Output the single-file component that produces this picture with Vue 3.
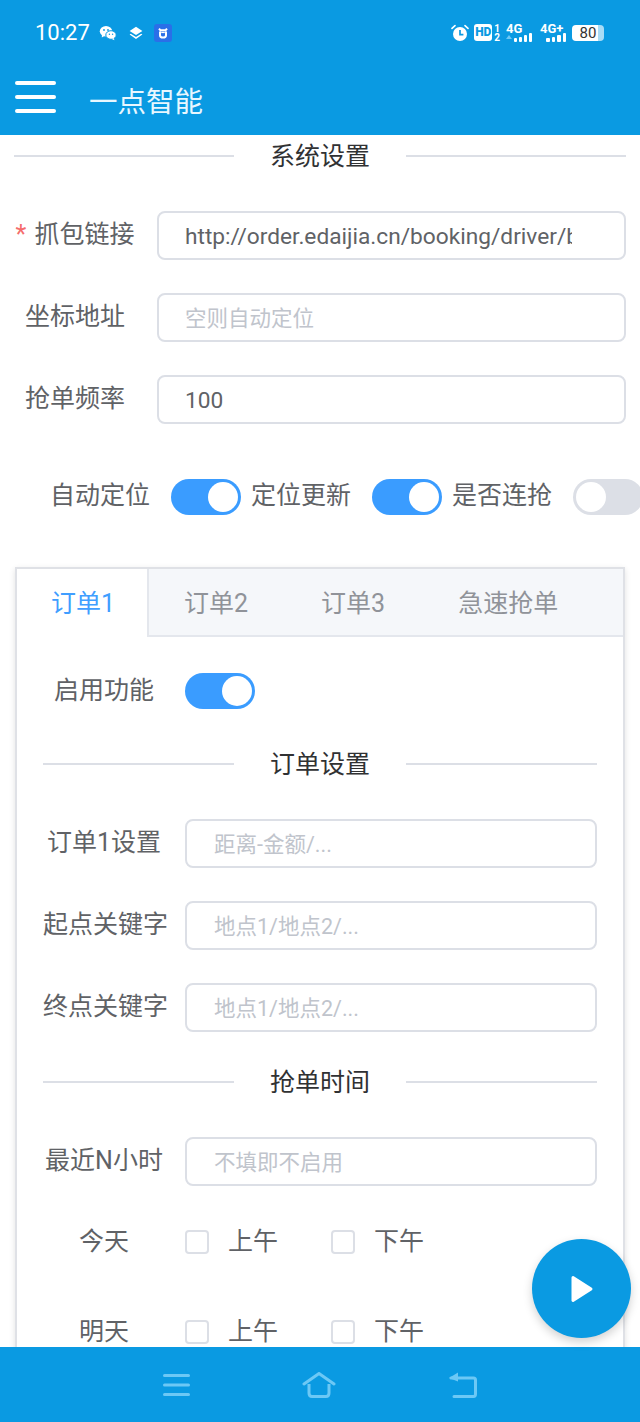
<template>
  <div class="screen">
    <div class="top">
      <div class="status">
        <span class="time">10:27</span>
        <svg class="ic-wechat" width="18" height="16" viewBox="0 0 18 16">
          <ellipse cx="7" cy="6.200" rx="6.200" ry="5.200" fill="#fff" />
          <path d="M3 9.500 2.800 12.400 6 10.600Z" fill="#fff" />
          <ellipse cx="12" cy="10" rx="5.200" ry="4.300" fill="#fff" stroke="#0a9ae2" stroke-width="1" />
          <path d="M14.800 13 15.400 15.200 12.800 14Z" fill="#fff" />
          <circle cx="5" cy="5" r=".9" fill="#0a9ae2" />
          <circle cx="9" cy="5" r=".9" fill="#0a9ae2" />
          <circle cx="10.400" cy="9.200" r=".7" fill="#0a9ae2" />
          <circle cx="13.600" cy="9.200" r=".7" fill="#0a9ae2" />
        </svg>
        <svg class="ic-layers" width="14" height="14" viewBox="0 0 14 14">
          <path d="M7 .8 13.400 4.900 7 9 .6 4.900Z" fill="#fff" />
          <path d="M1.800 7.700 7 11 12.200 7.700 13.400 8.600 7 13 .6 8.600Z" fill="#fff" />
        </svg>
        <svg class="ic-app" width="18" height="18" viewBox="0 0 18 18">
          <rect width="18" height="18" rx="3" fill="#2a6fe8" />
          <path d="M5 4.600 6.400 6.200H11.600L13 4.600M6 7.400V11.200C6 12.600 7 13.600 9 13.600S12 12.600 12 11.200V7.400" fill="none" stroke="#fff" stroke-width="2" />
          <path d="M7.200 8.400H10.800" stroke="#fff" stroke-width="1.400" />
        </svg>
        <span class="status-gap"></span>
        <svg class="ic-alarm" width="18" height="18" viewBox="0 0 18 18">
          <circle cx="9" cy="10" r="7" fill="#fff" />
          <path d="M1 4.400 4 1.600M17 4.400 14 1.600" stroke="#fff" stroke-width="1.600" stroke-linecap="round" />
          <path d="M9 6V10.600H12.400" fill="none" stroke="#0a9ae2" stroke-width="1.700" />
        </svg>
        <span class="hd">HD</span>
        <span class="sim"><b>1</b><b>2</b></span>
        <span class="net">
          <span class="net-label">4G</span>
          <span class="bars">
            <u></u>
            <i style="height: 4px"></i><i style="height: 5px"></i><i style="height: 7px"></i><i style="height: 9px"></i>
          </span>
        </span>
        <span class="net net-two">
          <span class="net-label">4G+</span>
          <span class="bars">
            <i style="height: 4px"></i><i style="height: 5px"></i><i style="height: 7px"></i><i style="height: 9px"></i>
          </span>
        </span>
        <span class="battery"><span class="battery-num">80</span></span>
      </div>
      <div class="header">
        <div class="burger"><i></i><i></i><i></i></div>
        <span class="title">一点智能</span>
      </div>
    </div>

    <div class="main">
      <div class="divider first"><span>系统设置</span></div>

      <div class="form-row" v-for="row in systemRows" :key="row.label">
        <label class="label sys-label"><em v-if="row.required">*</em>{{ row.label }}</label>
        <input class="input" readonly :value="row.value" :placeholder="row.placeholder" />
      </div>

      <div class="switch-row">
        <span class="sw-label">自动定位</span>
        <span class="switch on"></span>
        <span class="sw-label">定位更新</span>
        <span class="switch on"></span>
        <span class="sw-label">是否连抢</span>
        <span class="switch"></span>
      </div>

      <div class="card">
        <div class="tabs">
          <span
            v-for="(tab, index) in tabs"
            :key="tab"
            class="tab"
            :class="{ active: index === 0 }"
          >{{ tab }}</span>
        </div>
        <div class="panel">
          <div class="enable-row">
            <span class="label">启用功能</span>
            <span class="switch on"></span>
          </div>

          <div class="divider"><span>订单设置</span></div>

          <div class="form-row panel-row" v-for="row in orderRows" :key="row.label">
            <label class="label">{{ row.label }}</label>
            <input class="input" readonly :placeholder="row.placeholder" />
          </div>

          <div class="divider second"><span>抢单时间</span></div>

          <div class="form-row panel-row">
            <label class="label">最近N小时</label>
            <input class="input" readonly placeholder="不填即不启用" />
          </div>

          <div class="check-list">
            <div class="check-row" v-for="day in ['今天', '明天']" :key="day">
              <span class="label">{{ day }}</span>
              <span class="check"><i></i>上午</span>
              <span class="check"><i></i>下午</span>
            </div>
          </div>
        </div>
      </div>
    </div>

    <div class="fab">
      <svg width="24" height="32" viewBox="0 0 24 32">
        <path d="M3 4.500 21 16 3 27.500Z" fill="#fff" stroke="#fff" stroke-width="3" stroke-linejoin="round" />
      </svg>
    </div>

    <div class="nav">
      <svg width="27" height="24" viewBox="0 0 27 24">
        <path d="M1.500 2.500H25.500M1.500 12H25.500M1.500 21.500H25.500" stroke="#6cc8f5" stroke-width="3" stroke-linecap="round" />
      </svg>
      <svg width="34" height="26" viewBox="0 0 34 26">
        <path d="M2 12 17 1.500 32 12" fill="none" stroke="#6cc8f5" stroke-width="3" stroke-linecap="round" stroke-linejoin="round" />
        <path d="M7 12V21C7 23.500 8 24.500 10 24.500H24C26 24.500 27 23.500 27 21V12" fill="none" stroke="#6cc8f5" stroke-width="3" />
      </svg>
      <svg width="29" height="26" viewBox="0 0 29 26">
        <path d="M3 6H25.500C27 6 27.500 7 27.500 8V22C27.500 23.500 27 24.500 25.500 24.500H6" fill="none" stroke="#6cc8f5" stroke-width="3" stroke-linecap="round" />
        <path d="M10 .5 1 6 10 9.500Z" fill="#6cc8f5" />
      </svg>
    </div>
  </div>
</template>

<script setup>
const systemRows = [
  { label: "抓包链接", required: true, value: "http://order.edaijia.cn/booking/driver/booking", placeholder: "" },
  { label: "坐标地址", value: "", placeholder: "空则自动定位" },
  { label: "抢单频率", value: "100", placeholder: "" },
];

const tabs = ["订单1", "订单2", "订单3", "急速抢单"];

const orderRows = [
  { label: "订单1设置", placeholder: "距离-金额/..." },
  { label: "起点关键字", placeholder: "地点1/地点2/..." },
  { label: "终点关键字", placeholder: "地点1/地点2/..." },
];
</script>

<style>
html,
body {
  margin: 0;
  background: #fff;
}
</style>

<style scoped>
* {
  box-sizing: border-box;
}

.screen {
  position: relative;
  width: 640px;
  height: 1422px;
  display: flex;
  flex-direction: column;
  overflow: hidden;
  background: #fff;
  font-family: Roboto, "Noto Sans CJK SC", sans-serif;
  color: #606266;
}

.top {
  background: #0a9ae2;
  color: #fff;
  flex: none;
}

.status {
  height: 65px;
  padding: 0 36px 0 35px;
  display: flex;
  align-items: center;
}

.time {
  font-size: 22px;
  width: 54px;
}

.ic-wechat {
  margin: 0 0 0 10px;
}

.ic-layers {
  margin: 0 0 0 12px;
}

.ic-app {
  margin: 0 0 0 11px;
}

.status-gap {
  flex: 1;
}

.ic-alarm {
  margin-right: 5px;
  flex: none;
}

.hd {
  width: 18px;
  height: 17px;
  border-radius: 3px;
  background: #fff;
  color: #0a9ae2;
  font-size: 12px;
  font-weight: 900;
  line-height: 17px;
  text-align: center;
}

.sim {
  display: flex;
  flex-direction: column;
  font-size: 10px;
  line-height: 9px;
  margin: 0 6px 0 2px;
}

.sim b {
  display: block;
}

.net {
  display: flex;
  flex-direction: column;
  width: 26px;
  margin-right: 8px;
}

.net-two {
  width: 26px;
  margin-right: 6px;
}

.net-label {
  height: 9px;
  font-size: 13px;
  font-weight: 700;
  line-height: 10px;
  white-space: nowrap;
}

.bars {
  display: flex;
  justify-content: flex-end;
  align-items: flex-end;
  gap: 2px;
  height: 9px;
}

.bars i {
  width: 3.500px;
  background: #fff;
  border-radius: 1px;
}

.bars u {
  width: 0;
  height: 0;
  margin-bottom: 3px;
  border: 3px solid transparent;
  border-top: none;
  border-bottom: 4px solid #6cc8f5;
}

.battery {
  position: relative;
  width: 32px;
  height: 16px;
  border-radius: 4px;
  background: linear-gradient(90deg, #fff 82%, #a9dcf6 82%);
  color: #333;
  font-size: 15px;
  line-height: 16px;
  text-align: center;
}

.header {
  height: 70px;
  display: flex;
  align-items: center;
  padding: 0 0 0 15px;
}

.burger {
  width: 41px;
  display: flex;
  flex-direction: column;
  gap: 10px;
  margin-top: -6px;
}

.burger i {
  height: 4px;
  border-radius: 2px;
  background: #fff;
}

.title {
  margin: 6px 0 0 33px;
  font-size: 28.500px;
  font-weight: 400;
  line-height: 40px;
  color: #e8f7ff;
}

.main {
  flex: 1;
  overflow: hidden;
  padding: 0 14px;
}

.divider {
  display: flex;
  align-items: center;
  height: 42px;
  font-size: 25px;
  color: #303133;
  margin-bottom: 34px;
}

.divider::before,
.divider::after {
  content: "";
  flex: 1;
  height: 2px;
  background: #dcdfe6;
}

.divider span {
  padding: 0 36px;
  line-height: 36px;
  margin-top: 1px;
}

.form-row {
  display: flex;
  align-items: center;
  height: 49px;
  margin-bottom: 33px;
}

.label {
  flex: none;
  font-size: 25px;
  line-height: 34px;
  color: #606266;
  text-align: center;
  white-space: nowrap;
  margin-top: -2px;
}

.sys-label {
  width: 122px;
  margin-right: 21px;
  display: block;
}

.sys-label em {
  font-style: normal;
  color: #f56c6c;
  margin-right: 8px;
  font-size: 25px;
}

.input {
  flex: 1;
  min-width: 0;
  height: 49px;
  border: 2px solid #dcdfe6;
  border-radius: 8px;
  padding: 1px 52px 0 26px;
  font: inherit;
  font-size: 22.700px;
  color: #606266;
  background: #fff;
  outline: none;
}

.input::placeholder {
  color: #c0c4cc;
  font-size: 21.500px;
  opacity: 1;
}

.switch-row {
  display: flex;
  align-items: center;
  height: 36px;
  margin-top: 55px;
  padding-left: 36px;
  width: 680px;
}

.sw-label {
  font-size: 25px;
  line-height: 34px;
  margin-top: -2px;
  white-space: nowrap;
  margin-right: 21px;
}

.switch-row .switch {
  margin-right: 10px;
}

.switch {
  position: relative;
  flex: none;
  width: 70px;
  height: 36px;
  border-radius: 18px;
  background: #dcdfe6;
}

.switch::after {
  content: "";
  position: absolute;
  top: 3px;
  left: 3px;
  width: 30px;
  height: 30px;
  border-radius: 50%;
  background: #fff;
}

.switch.on {
  background: #3a9cff;
}

.switch.on::after {
  left: 37px;
}

.card {
  margin: 52px 1px 0;
  border: 2px solid #dfe1e6;
  box-shadow: 0 2px 6px rgba(0, 0, 0, 0.12);
  background: #fff;
  height: 900px;
}

.tabs {
  display: flex;
  height: 68px;
  background: #f5f7fa;
  border-bottom: 2px solid #e4e7ed;
}

.tab {
  height: 66px;
  line-height: 70px;
  padding: 0 36.500px;
  font-size: 25px;
  color: #909399;
  white-space: nowrap;
}

.tab:nth-child(2) {
  padding-left: 35px;
}

.tab.active {
  width: 132px;
  height: 68px;
  padding: 0 0 0 34px;
  color: #409eff;
  background: #fff;
  border-right: 2px solid #e4e7ed;
}

.panel {
  padding: 36px 26px 0;
}

.enable-row {
  display: flex;
  align-items: center;
  height: 36px;
  margin-bottom: 34px;
}

.enable-row .label,
.panel-row .label,
.check-row .label {
  width: 122px;
  margin-right: 20px;
}

.enable-row .label,
.check-row .label {
  margin-top: 0;
}

.panel-row .input {
  padding: 1px 27px 0;
}

.panel-row {
  margin-bottom: 33px;
}

.panel .divider.second {
  margin-top: -4px;
}

.check-list {
  padding-top: 5px;
}

.check-row {
  display: flex;
  align-items: center;
  height: 36px;
  margin-bottom: 54px;
}

.check {
  display: flex;
  align-items: center;
  width: 146px;
  font-size: 25px;
  line-height: 34px;
}

.check i {
  width: 24px;
  height: 24px;
  margin: 0 19px 0 0;
  border: 2px solid #dcdfe6;
  border-radius: 4px;
  background: #fff;
}

.fab {
  position: absolute;
  left: 532px;
  top: 1239px;
  width: 99px;
  height: 99px;
  border-radius: 50%;
  background: #0a9ae2;
  box-shadow: 0 4px 10px rgba(0, 0, 0, 0.18);
  display: flex;
  align-items: center;
  justify-content: center;
}

.nav {
  flex: none;
  height: 75px;
  background: #0a9ae2;
  display: flex;
  align-items: center;
  justify-content: center;
  gap: 112px;
}
</style>
